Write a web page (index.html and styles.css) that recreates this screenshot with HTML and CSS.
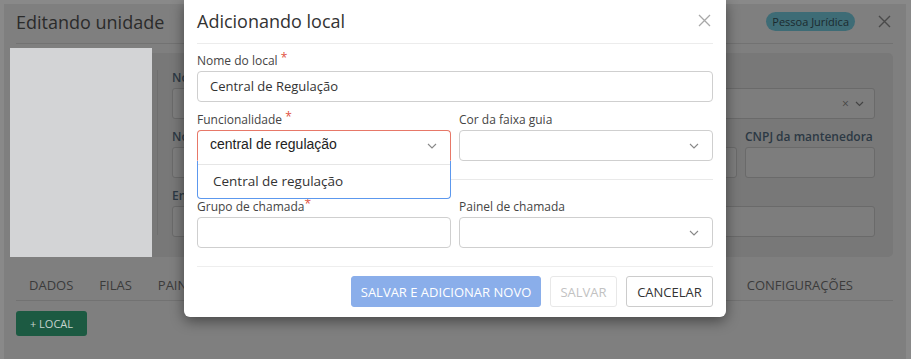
FILE: index.html
```html
<!DOCTYPE html>
<html lang="pt-BR">
<head>
<meta charset="utf-8">
<title>Adicionando local</title>
<link rel="stylesheet" href="styles.css">
</head>
<body>
<div class="page">
  <div class="page-head">
    <h1 class="page-title">Editando unidade</h1>
    <span class="badge">Pessoa Jurídica</span>
    <svg class="page-close" width="13" height="13" viewBox="0 0 13 13"><path d="M1 1L12 12M12 1L1 12" stroke="#4a4a4a" stroke-width="1.4" fill="none"/></svg>
  </div>
  <div class="content-row">
    <div class="photo"></div>
    <div class="panel">
      <div class="vline"></div>
      <div class="panel-fields">
        <div class="pf">
          <span class="pl">Nome</span>
          <div class="pi pi-select"><span class="pi-icons">×&nbsp;&nbsp;<svg width="9" height="6" viewBox="0 0 9 6"><path d="M1 1l3.5 3.5L8 1" stroke="#444" stroke-width="1.2" fill="none"/></svg></span></div>
        </div>
        <div class="prow">
          <div class="pf grow">
            <span class="pl">Nome</span>
            <div class="pi"></div>
          </div>
          <div class="pf w130">
            <span class="pl">CNPJ da mantenedora</span>
            <div class="pi"></div>
          </div>
        </div>
        <div class="pf">
          <span class="pl">Endereço</span>
          <div class="pi"></div>
        </div>
      </div>
    </div>
  </div>
  <div class="tabs">
    <span class="tab">DADOS</span>
    <span class="tab">FILAS</span>
    <span class="tab">PAINÉIS</span>
    <span class="tab tab-last">CONFIGURAÇÕES</span>
  </div>
  <button class="btn-local">+ LOCAL</button>
</div>

<div class="modal">
  <div class="modal-head">
    <h2 class="modal-title">Adicionando local</h2>
    <svg class="modal-close" width="13" height="13" viewBox="0 0 13 13"><path d="M1 1L12 12M12 1L1 12" stroke="#a8a8a8" stroke-width="1.3" fill="none"/></svg>
  </div>
  <div class="modal-body">
    <div class="field">
      <label class="lbl">Nome do local <span class="req">*</span></label>
      <div class="input"><span class="val">Central de Regulação</span></div>
    </div>
    <div class="grid">
      <div class="field">
        <label class="lbl">Funcionalidade <span class="req">*</span></label>
        <div class="select open">
          <span class="typed">central de regulação</span>
          <svg class="chev" width="10" height="6" viewBox="0 0 10 6"><path d="M1 1l4 4 4-4" stroke="#888" stroke-width="1.1" fill="none"/></svg>
          <div class="menu">
            <div class="option">Central de regulação</div>
          </div>
        </div>
      </div>
      <div class="field">
        <label class="lbl">Cor da faixa guia</label>
        <div class="select">
          <svg class="chev" width="10" height="6" viewBox="0 0 10 6"><path d="M1 1l4 4 4-4" stroke="#888" stroke-width="1.1" fill="none"/></svg>
        </div>
      </div>
    </div>
    <hr class="sep">
    <div class="grid">
      <div class="field">
        <label class="lbl">Grupo de chamada<span class="req">*</span></label>
        <div class="input"></div>
      </div>
      <div class="field">
        <label class="lbl">Painel de chamada</label>
        <div class="select">
          <svg class="chev" width="10" height="6" viewBox="0 0 10 6"><path d="M1 1l4 4 4-4" stroke="#888" stroke-width="1.1" fill="none"/></svg>
        </div>
      </div>
    </div>
  </div>
  <div class="modal-foot">
    <button class="btn btn-primary">SALVAR E ADICIONAR NOVO</button>
    <button class="btn btn-disabled">SALVAR</button>
    <button class="btn btn-default">CANCELAR</button>
  </div>
</div>
</body>
</html>
```
FILE: styles.css
```css
* { box-sizing: border-box; }
html, body { margin: 0; padding: 0; }
body {
  width: 911px;
  height: 359px;
  overflow: hidden;
  background: #898989;
  padding: 4px 5px 0 4px;
  font-family: "Open Sans", "Noto Sans", sans-serif;
  position: relative;
}
.page {
  background: #7f7f7f;
  height: 355px;
  padding: 0 13px 0 6px;
}
.page-head {
  height: 40px;
  margin-left: 6px;
  border-bottom: 1px solid #727272;
  display: flex;
  align-items: center;
}
.page-title {
  margin: 0;
  font-weight: 400;
  font-size: 18px;
  color: #2b2b2b;
  flex: 1;
  position: relative;
  top: -2px;
}
.badge {
  background: #3e6c76;
  color: #1b2a2e;
  font-size: 11px;
  border-radius: 10px;
  padding: 2px 6px;
  line-height: 15px;
  position: relative;
  top: -2px;
  margin-right: 23px;
}
.page-close { position: relative; top: -2px; margin-right: 2px; }
.content-row { display: flex; align-items: flex-start; }
.photo {
  width: 142px;
  height: 209px;
  margin-top: 4px;
  background: #d3d4d6;
}
.panel {
  flex: 1;
  height: 204px;
  margin-top: 9px;
  background: #787878;
  border-radius: 0 5px 5px 0;
  display: flex;
  padding: 17px 18px 0 5px;
}
.vline { width: 1px; height: 165px; background: #6f6f6f; margin-right: 14px; }
.panel-fields { flex: 1; display: flex; flex-direction: column; gap: 10px; }
.prow { display: flex; gap: 8px; }
.grow { flex: 1; }
.w130 { width: 130px; }
.pf { display: flex; flex-direction: column; }
.pl { font-size: 12px; line-height: 16px; color: #2c3844; font-weight: 600; margin-bottom: 2px; }
.pi {
  height: 31px;
  border: 1px solid #6a6a6a;
  border-radius: 3px;
  background: #7d7d7d;
  display: flex;
  align-items: center;
  justify-content: flex-end;
  padding-right: 10px;
}
.pi-icons { color: #474747; font-size: 12px; display: flex; align-items: center; }
.tabs {
  margin: 10px 0 0 6px;
  height: 34px;
  border-bottom: 1px solid #727272;
  display: flex;
  align-items: center;
}
.tab {
  font-size: 13px;
  color: #3b3b3b;
  padding: 0 13px;
  position: relative;
  top: 1px;
}
.tab-last { margin-left: auto; margin-right: 27px; }
.btn-local {
  margin: 10px 0 0 6px;
  height: 25px;
  width: 71px;
  border: 0;
  border-radius: 3px;
  background: #1c5a42;
  color: #c6d3cd;
  font-family: "Open Sans", sans-serif;
  font-size: 11px;
  padding: 0;
}

/* modal */
.modal {
  position: absolute;
  left: 184px;
  top: 0;
  width: 542px;
  background: #fff;
  border-radius: 0 0 6px 6px;
  box-shadow: 0 4px 14px rgba(0,0,0,0.45);
}
.modal-head {
  height: 44px;
  margin: 0 13px;
  border-bottom: 1px solid #ececec;
  display: flex;
  align-items: center;
  justify-content: space-between;
}
.modal-title {
  margin: 0;
  font-weight: 400;
  font-size: 18px;
  color: #333;
  position: relative;
  top: -1px;
}
.modal-close { margin-right: 2px; position: relative; top: -1px; }
.modal-body { padding: 9px 13px 18px; }
.field { display: flex; flex-direction: column; }
.lbl {
  font-size: 12px;
  line-height: 16px;
  color: #444;
  margin-bottom: 2px;
}
.req { color: #e0513f; font-size: 12px; position: relative; top: -3px; }
.grid {
  display: grid;
  grid-template-columns: 254px 254px;
  column-gap: 8px;
  margin-top: 10px;
}
.input, .select {
  height: 31px;
  border: 1px solid #cfcfcf;
  border-radius: 4px;
  display: flex;
  align-items: center;
  padding: 0 12px;
  position: relative;
}
.val { font-size: 13px; color: #333; position: relative; top: -1px; }
.select { justify-content: space-between; }
.select .chev { margin-left: auto; margin-right: 1px; }
.select.open {
  border-color: #e77868;
  border-bottom-color: transparent;
  border-radius: 4px 4px 0 0;
  padding-left: 12px;
}
.typed {
  font-family: "Liberation Sans", Arial, sans-serif;
  font-size: 14px;
  color: #222;
  position: relative;
  top: -2px;
}
.menu {
  position: absolute;
  left: -1px;
  right: -1px;
  top: 30px;
  height: 38px;
  background: #fff;
  border: 1px solid #5c98ee;
  border-top: 0;
  border-radius: 0 0 4px 4px;
  padding-top: 3px;
  z-index: 2;
}
.option {
  border-top: 1px solid #e6e6e6;
  height: 33px;
  display: flex;
  align-items: center;
  padding-left: 15px;
  font-size: 13.5px;
  color: #333;
}
.sep {
  border: 0;
  border-top: 1px solid #e9e9e9;
  margin: 18px 0 0;
}
.sep + .grid { margin-top: 19px; }
.modal-foot {
  margin: 0 13px;
  border-top: 1px solid #eeeeee;
  padding: 9px 0 10px;
  display: flex;
  justify-content: flex-end;
  gap: 9px;
}
.btn {
  height: 31px;
  border-radius: 3px;
  font-family: "Open Sans", sans-serif;
  font-size: 13px;
  padding: 0;
  background: #fff;
}
.btn-primary { width: 190px; background: #8aaeea; border: 1px solid #8aaeea; color: #fff; }
.btn-disabled { width: 67px; border: 1px solid #e8e8e8; color: #c2c2c2; }
.btn-default { width: 87px; border: 1px solid #cccccc; color: #333; }
```
